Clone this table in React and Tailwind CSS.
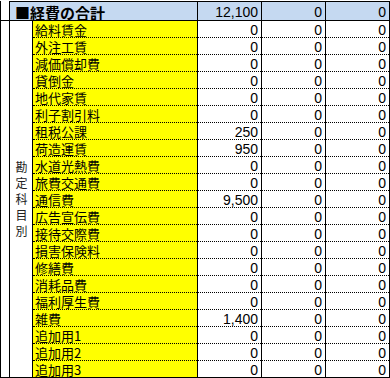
import React from "react";

const rows = [
  ["給料賃金", "0"],
  ["外注工賃", "0"],
  ["減価償却費", "0"],
  ["貸倒金", "0"],
  ["地代家賃", "0"],
  ["利子割引料", "0"],
  ["租税公課", "250"],
  ["荷造運賃", "950"],
  ["水道光熱費", "0"],
  ["旅費交通費", "0"],
  ["通信費", "9,500"],
  ["広告宣伝費", "0"],
  ["接待交際費", "0"],
  ["損害保険料", "0"],
  ["修繕費", "0"],
  ["消耗品費", "0"],
  ["福利厚生費", "0"],
  ["雑費", "1,400"],
  ["追加用1", "0"],
  ["追加用2", "0"],
  ["追加用3", "0"],
];

const jp = "font-['Noto_Sans_CJK_JP',sans-serif]";
const num = "font-['Liberation_Sans_Narrow','Liberation_Sans',sans-serif] text-[14px]";

function Separator({ last }) {
  if (last) return <div className="h-px bg-black w-full" />;
  return (
    <div className="flex h-px">
      <div className="w-[165px] h-px flex bg-[#ffff00]">
        <div className="flex-1 h-px border-t border-dotted border-black" />
        <div className="w-px h-px bg-black" />
      </div>
      {[0, 1, 2].map((j) => (
        <div key={j} className="w-[64px] h-px flex">
          <div className="flex-1 h-px border-t border-dotted border-black" />
          <div className="w-px h-px bg-black" />
        </div>
      ))}
    </div>
  );
}

export default function App() {
  return (
    <div className="w-[390px] h-[378px] bg-white pt-px text-black overflow-hidden">
      {/* header */}
      <div className="flex h-[19px]">
        <div className="w-[10px] h-full border-l border-r border-black" />
        <div
          className={`w-[188px] h-full bg-[#c5d9f1] border-t border-r border-black flex items-center pl-[5px] pt-[2px] text-[15px] font-bold leading-none ${jp}`}
        >
          ■経費の合計
        </div>
        {["12,100", "0", "0"].map((v, i) => (
          <div
            key={i}
            className={`w-[64px] h-full bg-[#c5d9f1] border-t border-r border-black flex items-center justify-end pr-[3px] pt-[2px] leading-none ${num}`}
          >
            {v}
          </div>
        ))}
      </div>
      <div className="h-px bg-black w-full" />
      {/* body */}
      <div className="flex h-[357px]">
        <div className="w-[10px] h-full border-l border-r border-b border-black" />
        <div
          className={`w-[23px] h-full border-r border-b border-black flex items-center justify-center text-[#222] ${jp}`}
        >
          <span className="[writing-mode:vertical-rl] text-[12px] tracking-[4px] leading-none pt-[4px]">
            勘定科目別
          </span>
        </div>
        <div className="w-[357px] flex flex-col">
          {rows.map(([name, v], i) => {
            const last = i === rows.length - 1;
            return (
              <div key={i} className="flex flex-col h-[17px]">
                <div className="flex h-[16px]">
                  <div
                    className={`w-[165px] h-full bg-[#ffff00] border-r border-black flex items-center pl-[2px] pt-px text-[13px] leading-none ${jp}`}
                  >
                    {name}
                  </div>
                  {[v, "0", "0"].map((x, j) => (
                    <div
                      key={j}
                      className={`w-[64px] h-full border-r border-black flex items-center justify-end pr-[3px] pt-px leading-none ${num}`}
                    >
                      {x}
                    </div>
                  ))}
                </div>
                <Separator last={last} />
              </div>
            );
          })}
        </div>
      </div>
    </div>
  );
}
